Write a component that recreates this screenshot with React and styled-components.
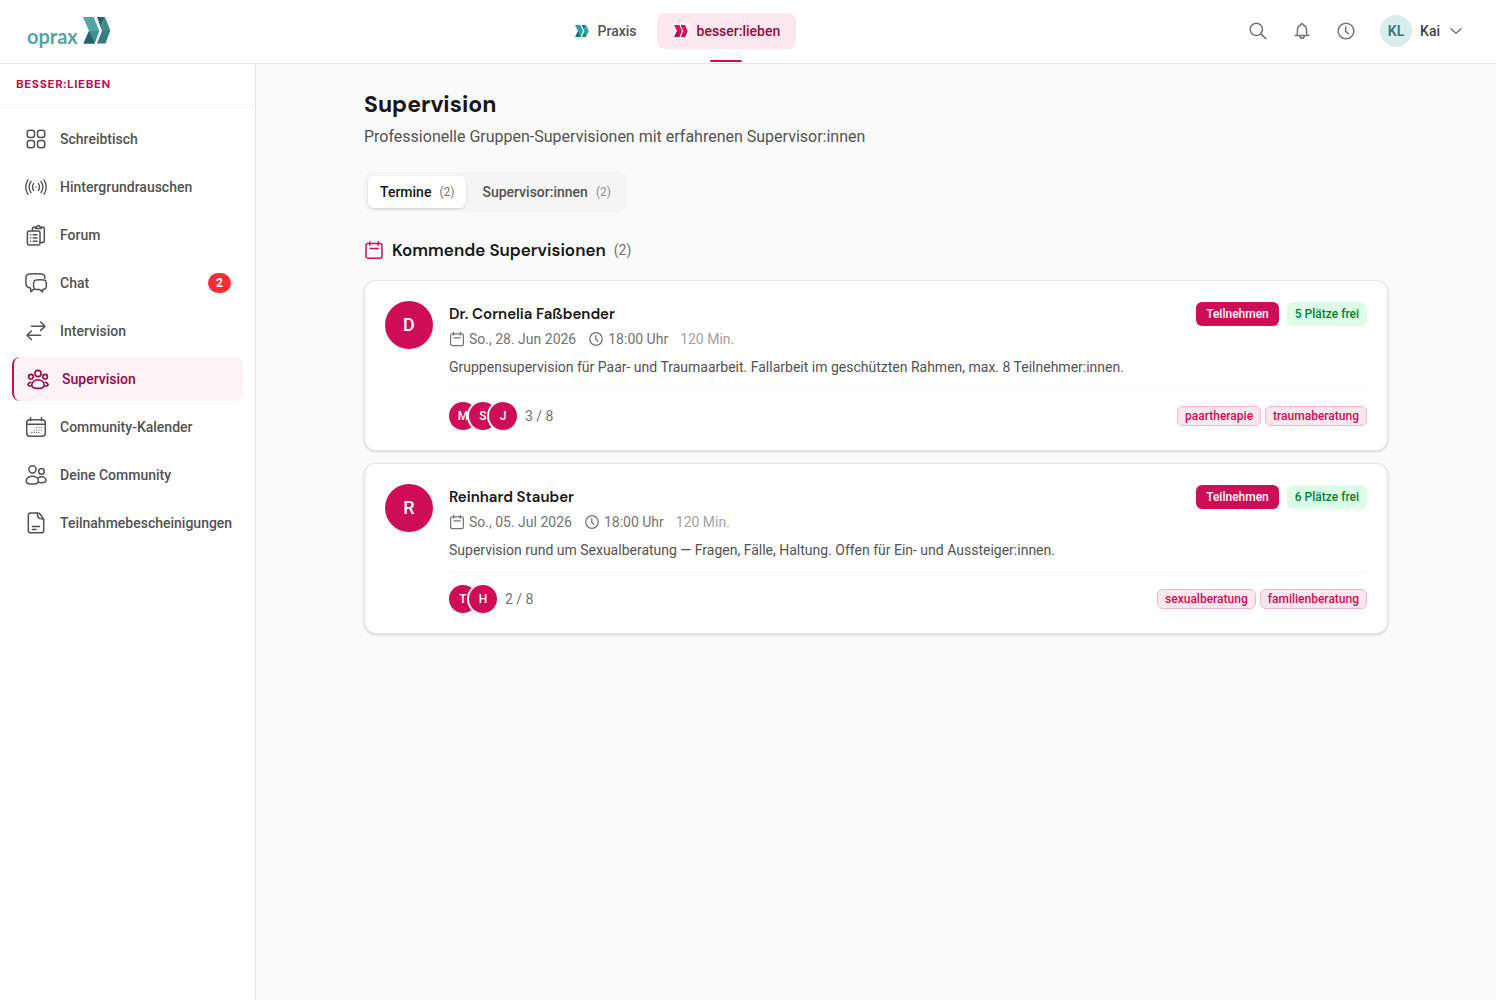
import React, { useState } from "react";
import styled, { createGlobalStyle, css } from "styled-components";

const color = {
  pink: "#cf0c56",
  pinkDark: "#980842",
  pinkTint: "#fce7ee",
  pinkSoft: "#fdf2f6",
  pinkLine: "#f3b5cb",
  ink: "#171717",
  text: "#525252",
  muted: "#737373",
  faint: "#a3a3a3",
  line: "#e5e5e5",
  lineSoft: "#f5f5f5",
  page: "#fafafa",
};

const bodyFont = `Roboto, "Liberation Sans", sans-serif`;
const headingFont = `"DM Sans", Inter, "Liberation Sans", sans-serif`;

const GlobalStyle = createGlobalStyle`
  *, *::before, *::after { box-sizing: border-box; }
  body {
    margin: 0;
    background: ${color.page};
    color: ${color.text};
    font: 400 14px/20px ${bodyFont};
  }
  button { font: inherit; color: inherit; border: 0; background: none; padding: 0; cursor: pointer; }
  a { color: inherit; text-decoration: none; }
  h1, h2, h3, p, ul { margin: 0; padding: 0; }
  ul { list-style: none; }
`;

/* Shell */
const Shell = styled.div`
  min-height: 100vh;
  display: flex;
  flex-direction: column;
`;
const Header = styled.header`
  height: 64px;
  padding: 0 24px 1px;
  display: flex;
  align-items: center;
  justify-content: space-between;
  background: #fff;
  border-bottom: 1px solid ${color.line};
`;
const Body = styled.div`
  flex: 1;
  display: flex;
`;
const Sidebar = styled.aside`
  flex: 0 0 256px;
  min-width: 0;
  background: #fff;
  border-right: 1px solid ${color.line};
`;
const Main = styled.main`
  flex: 1;
  min-width: 0;
  padding: 24px;
`;
const Content = styled.div`
  max-width: 1024px;
  margin: 0 auto;
`;

/* Header */
const Logo = styled.a`
  display: flex;
  align-items: center;
  gap: 5px;
  padding: 0 3px 2px;
  color: #55a3a2;
  font: 700 20px/28px Lato, sans-serif;
`;
const LogoWord = styled.span`
  padding-top: 12px;
`;
const AreaNav = styled.nav`
  display: flex;
  gap: 4px;
`;
const AreaLink = styled.a`
  position: relative;
  height: 36px;
  padding: 0 16px;
  display: flex;
  align-items: center;
  gap: 8px;
  border-radius: 8px;
  font-weight: 500;
  ${(p) =>
    p.$active &&
    css`
      color: ${color.pinkDark};
      background: ${color.pinkTint};
      &::after {
        content: "";
        position: absolute;
        left: 50%;
        bottom: -13px;
        width: 32px;
        height: 2px;
        margin-left: -16px;
        border-radius: 1px;
        background: ${color.pink};
      }
    `}
`;
const HeaderTools = styled.div`
  display: flex;
  align-items: center;
  gap: 8px;
`;
const IconButton = styled.button`
  width: 36px;
  height: 36px;
  display: grid;
  place-items: center;
  border-radius: 8px;
  color: ${color.muted};
`;
const ProfileButton = styled.button`
  display: flex;
  align-items: center;
  gap: 8px;
  padding: 0 8px;
  color: #404040;
  font-weight: 500;
  svg { color: ${color.muted}; }
`;
const ProfileAvatar = styled.span`
  width: 32px;
  height: 32px;
  display: grid;
  place-items: center;
  border-radius: 50%;
  background: #d9edec;
  color: #357777;
  font-weight: 600;
`;

/* Sidebar */
const SidebarTitle = styled.div`
  padding: 12px 16px;
  line-height: 16px;
  border-bottom: 1px solid ${color.lineSoft};
  color: #c00b50;
  font-family: ${headingFont};
  font-size: 12px;
  font-weight: 700;
  letter-spacing: 0.05em;
  text-transform: uppercase;
`;
const NavList = styled.ul`
  display: flex;
  flex-direction: column;
  gap: 4px;
  padding: 12px;
`;
const NavLink = styled.a`
  height: 44px;
  padding: 0 12px;
  display: flex;
  align-items: center;
  gap: 12px;
  border-radius: 8px;
  font-weight: 500;
  white-space: nowrap;
  ${(p) =>
    p.$active &&
    css`
      color: ${color.pinkDark};
      background: ${color.pinkSoft};
      border-left: 2px solid ${color.pink};
    `}
`;
const NavCount = styled.span`
  margin-left: auto;
  padding: 0 8px;
  border-radius: 10px;
  background: #fb2c36;
  color: #fff;
  font-size: 12px;
  font-weight: 700;
`;

/* Page head */
const PageTitle = styled.h1`
  color: ${color.ink};
  font: 700 23px/33px ${headingFont};
`;
const PageLead = styled.p`
  margin-top: 4px;
  font-size: 16px;
  line-height: 24px;
`;
const Tabs = styled.div`
  display: inline-flex;
  gap: 4px;
  margin-top: 23px;
  padding: 4px;
  border-radius: 8px;
  background: ${color.lineSoft};
  vertical-align: top;
`;
const Tab = styled.button`
  height: 32px;
  padding: 0 12px;
  display: flex;
  align-items: center;
  gap: 8px;
  border-radius: 6px;
  font-weight: 500;
  ${(p) =>
    p.$active &&
    css`
      color: ${color.ink};
      background: #fff;
      box-shadow: 0 1px 3px rgba(0, 0, 0, 0.1), 0 1px 2px rgba(0, 0, 0, 0.06);
    `}
`;
const TabCount = styled.span`
  font-size: 12px;
  font-weight: 400;
  color: ${(p) => (p.$active ? color.muted : "#8c8c8c")};
`;
const SectionHead = styled.div`
  display: flex;
  align-items: center;
  gap: 8px;
  margin: 24px 0 16px;
  color: ${color.pink};
`;
const SectionTitle = styled.h2`
  color: ${color.ink};
  font: 600 17px/28px ${headingFont};
`;
const SectionCount = styled.span`
  color: ${color.muted};
`;

/* Cards */
const CardList = styled.div`
  display: flex;
  flex-direction: column;
  gap: 12px;
`;
const Card = styled.article`
  display: flex;
  gap: 16px;
  padding: 20px;
  border: 1px solid ${color.line};
  border-radius: 12px;
  background: #fff;
  box-shadow: 0 1px 3px rgba(0, 0, 0, 0.1), 0 1px 2px rgba(0, 0, 0, 0.06);
`;
const HostAvatar = styled.div`
  flex: none;
  width: 48px;
  height: 48px;
  display: grid;
  place-items: center;
  border-radius: 50%;
  background: ${color.pink};
  color: #fff;
  font-size: 18px;
  font-weight: 500;
`;
const CardBody = styled.div`
  flex: 1;
  min-width: 0;
`;
const CardTop = styled.div`
  display: flex;
  justify-content: space-between;
  align-items: center;
  height: 26px;
`;
const HostName = styled.h3`
  color: ${color.ink};
  font: 600 15px/24px ${headingFont};
`;
const Actions = styled.div`
  display: flex;
  gap: 8px;
`;
const JoinButton = styled.button`
  height: 24px;
  padding: 0 10px;
  border-radius: 6px;
  background: ${color.pink};
  color: #fff;
  font-size: 12px;
  font-weight: 500;
`;
const Seats = styled.span`
  padding: 0 8px;
  border-radius: 6px;
  background: #dcfce7;
  color: #008236;
  font-size: 12px;
  line-height: 24px;
  font-weight: 500;
`;
const Meta = styled.div`
  display: flex;
  gap: 12px;
  margin-top: 2px;
  color: ${color.muted};
`;
const MetaItem = styled.span`
  display: flex;
  align-items: center;
  gap: 4px;
  color: ${(p) => (p.$faint ? color.faint : "inherit")};
`;
const Description = styled.p`
  margin-top: 8px;
`;
const CardFoot = styled.div`
  display: flex;
  align-items: center;
  justify-content: space-between;
  margin-top: 12px;
  padding-top: 12px;
  border-top: 1px solid ${color.lineSoft};
`;
const People = styled.div`
  display: flex;
  align-items: center;
  color: ${color.muted};
`;
const Person = styled.span`
  width: 28px;
  height: 28px;
  display: grid;
  place-items: center;
  border-radius: 50%;
  background: ${color.pink};
  box-shadow: 0 0 0 2px #fff;
  color: #fff;
  font-size: 12px;
  font-weight: 500;
  & + & { margin-left: -8px; }
`;
const PeopleCount = styled.span`
  margin-left: 8px;
`;
const Tags = styled.div`
  display: flex;
  gap: 4px;
`;
const Tag = styled.span`
  padding: 0 7px;
  border: 1px solid ${color.pinkLine};
  border-radius: 6px;
  background: ${color.pinkTint};
  color: ${color.pink};
  font-size: 12px;
  line-height: 18px;
  font-weight: 500;
`;

/* Icons */
const Svg = styled.svg`
  flex: none;
  display: block;
  fill: none;
  stroke: currentColor;
  stroke-linecap: round;
  stroke-linejoin: round;
`;
const Icon = ({ size = 24, weight = 1.5, children }) => (
  <Svg width={size} height={size} viewBox="0 0 24 24" strokeWidth={weight} aria-hidden="true">
    {children}
  </Svg>
);

const GridIcon = () => (
  <Icon>
    <rect x="3.25" y="3.25" width="7.25" height="7.25" rx="2.5" />
    <rect x="13.5" y="3.25" width="7.25" height="7.25" rx="2.5" />
    <rect x="3.25" y="13.5" width="7.25" height="7.25" rx="2.5" />
    <rect x="13.5" y="13.5" width="7.25" height="7.25" rx="2.5" />
  </Icon>
);
const WavesIcon = () => (
  <Icon weight={1.4}>
    <path d="M4 4.8c-3 4.2-3 10.2 0 14.4M7 6.4c-2.2 3.3-2.2 7.9 0 11.2M9.6 8.6c-1.3 2-1.3 4.8 0 6.8" />
    <path d="M20 4.8c3 4.2 3 10.2 0 14.4M17 6.4c2.2 3.3 2.2 7.9 0 11.2M14.4 8.6c1.3 2 1.3 4.8 0 6.8M12 12h.01" />
  </Icon>
);
const ForumIcon = () => (
  <Icon weight={1.5}>
    <rect x="3.4" y="8" width="12.6" height="14" rx="1.6" />
    <path d="M8.4 7.8V6.2c0-1.2.9-2.1 2.1-2.1h.9M17.4 4.1h.8c1.2 0 2.1.9 2.1 2.1v11.2c0 1.2-.9 2.1-2.1 2.1H16.2" />
    <path d="M11.4 5.5c0-1 .7-1.6 1.5-1.7.4-1.7 2.6-1.7 3 0 .8.1 1.5.7 1.5 1.7z" />
    <path d="M6.6 11.7h.1M6.6 15h.1M6.6 18.3h.1M9.2 11.7h3.8M9.2 15h3.8M9.2 18.3h3.8" />
  </Icon>
);
const ChatIcon = () => (
  <Icon weight={1.5}>
    <path d="M20.9 7.4V6.6c0-2.2-1.4-3.4-3.4-3.6-4-.4-8-.4-12 0-2.1.2-3.4 1.5-3.5 3.6-.2 2.3-.2 4.5 0 6.7.1 1.9 1.3 3.1 3.1 3.4l.7.1c.6.1.9.4.9 1v2.9l3-2.4" />
    <path d="M12 8.9c2.8-.3 5.4-.3 7.900 0 1.4.2 2.2 1 2.3 2.3.2 1.7.2 3.3 0 4.900-.1 1.200-.8 1.900-2 2.100l-1.600.3v2.400l-2.900-2.300h-3.600c-1.400-.2-2.200-.9-2.400-2.300-.2-1.600-.2-3.200 0-4.900.2-1.400.9-2.300 2.300-2.500z" />
  </Icon>
);
const SwapIcon = () => (
  <Icon weight={1.6}>
    <path d="M7.5 7.2h13.5M16.7 3l4.3 4.2-4.3 4.2M16.5 16.2H3M7.3 12 3 16.2l4.3 4.3" />
  </Icon>
);
const GroupIcon = () => (
  <Icon weight={1.6}>
    <circle cx="12" cy="6.5" r="3.1" />
    <circle cx="4.9" cy="9.7" r="2.3" />
    <circle cx="19.1" cy="9.7" r="2.3" />
    <path d="M12 12.7c-3.5 0-6.2 2.4-6.2 5.2 0 2.4 2.5 3.5 6.2 3.500s6.200-1.100 6.200-3.500c0-2.800-2.700-5.200-6.200-5.200z" />
    <path d="M4.7 15.200c-1.400.3-2.700 1.400-2.700 2.600 0 .9.9 1.300 2.800 1.200M19.3 15.200c1.400.3 2.700 1.400 2.700 2.600 0 .9-.9 1.300-2.800 1.200" />
  </Icon>
);
const EventsIcon = () => (
  <Icon weight={1.5}>
    <rect x="2.7" y="4.8" width="18.6" height="16.5" rx="3" />
    <path d="M2.7 9.3h18.6M6.5 2.6v3.2M17.5 2.6v3.2" />
    <path
      strokeWidth="1.2"
      d="M12.6 12.6h.01M15 12.6h.01M17.4 12.6h.01M10.2 15h.01M12.6 15h.01M15 15h.01M17.4 15h.01M7.8 17.4h.01M10.2 17.4h.01M12.6 17.4h.01M15 17.4h.01"
    />
  </Icon>
);
const PeopleIcon = () => (
  <Icon weight={1.5}>
    <circle cx="8.5" cy="6.3" r="3.6" />
    <circle cx="17.5" cy="8.4" r="2.8" />
    <path d="M8.3 13.3c-3.3 0-6.1 1.9-6.1 4.600 0 2.300 2.400 3.200 6.100 3.200s6.100-.9 6.100-3.200c0-2.700-2.800-4.600-6.100-4.600z" />
    <path d="M14 15c1-.8 2.2-1.2 3.5-1.2 2.4 0 4.5 1.4 4.5 3.4 0 1.8-1.8 2.5-4.5 2.5-1.2 0-2.2-.1-3-.4" />
  </Icon>
);
const DocumentIcon = () => (
  <Icon>
    <path d="M14 2H6.7C5.2 2 4.3 2.9 4.3 4.4v15c0 1.5.9 2.4 2.4 2.4h10.6c1.5 0 2.4-.9 2.4-2.4V9.2c0-1-.3-1.8-.9-2.5l-2.6-3.5C15.6 2.4 15 2 14 2z" />
    <path d="M12.6 2.2c1 .5 1.2 1.4 1.2 2.6 0 2 .7 2.7 2.5 2.7 1.5 0 2.6.2 3.2 1.3M8.4 15.6h7.2M8.4 18.4h3.6" />
  </Icon>
);
const SearchIcon = () => (
  <Icon size={20} weight={1.8}>
    <circle cx="10" cy="10" r="7.4" />
    <path d="m15.4 15.4 6 5.7" />
  </Icon>
);
const BellIcon = () => (
  <Icon size={20} weight={1.8}>
    <path d="M3.8 17.5h16.4M5.8 17.3c1.2-2 .4-5 .9-8 .4-2.6 1.9-4.3 4.1-4.9.2-1.7 2.2-1.7 2.4 0 2.2.6 3.7 2.3 4.1 4.9.5 3-.3 6 .9 8" />
    <path d="M9.2 17.8c.2 1.9 1.2 2.9 2.8 2.9s2.6-1 2.8-2.9" />
  </Icon>
);
const ClockIcon = ({ size, weight = 1.8 }) => (
  <Icon size={size} weight={weight}>
    <circle cx="12" cy="12" r="9.4" />
    <path d="M11.6 6.8v5.4l3.2 3.2" />
  </Icon>
);
const CalendarIcon = ({ size, weight = 1.8 }) => (
  <Icon size={size} weight={weight}>
    <rect x="2.4" y="4.2" width="19.2" height="17.6" rx="2.4" />
    <path d="M7 2v4.4M17 2v4.4M7.5 10.2h9.5" />
  </Icon>
);
const ChevronIcon = () => (
  <Icon size={16} weight={2}>
    <path d="m4.500 8.500 7.500 7 7.500-7" />
  </Icon>
);

const LogoMark = () => (
  <Svg width="28" height="27" viewBox="0 0 28 27" aria-hidden="true">
    <g stroke="none">
      <path fill="#53a5a3" d="M0 0h10.7l5.6 13.7-4.6 12.8H.5L6 13.7z" />
      <path fill="#3f898b" d="M5.5 14.5 16.3 13.7l-4.6 12.8H.5z" opacity=".8" />
      <path fill="#28606a" d="M6.3 14.5 11.7 26.5H.5z" />
      <path fill="#2b636c" d="M14 0h8l-4.5 10.2z" />
      <path fill="#44898b" d="M22 0l5.3 13.3-4.8 13.2H14L19 14l-1.5-3.8z" />
      <path fill="#2f6c75" d="M19 14h8l-4.5 12.5H14z" opacity=".45" />
    </g>
  </Svg>
);
const BrandMark = ({ light, dark, plate }) => (
  <Svg width="16" height="16" viewBox="0 0 16 16" aria-hidden="true">
    <g stroke="none">
      {plate && <path fill="#fff" d="M0 0h16v16H0z" opacity=".75" />}
      <path fill={light} d="M1 2h5.5L9 8l-2.5 6H1.2L4 8z" />
      <path fill={dark} d="M4 8.5 6.5 14H1.2z" />
      <path fill={dark} d="M7.8 2h4.3l-2.4 4.5z" />
      <path fill={light} d="M12.1 2 14.7 8l-2.6 6H7.9l2.4-5.8-.6-1.7z" />
      <path fill={dark} d="M10.3 8.5 12.1 14H7.9z" opacity=".5" />
    </g>
  </Svg>
);

const navItems = [
  { label: "Schreibtisch", icon: GridIcon },
  { label: "Hintergrundrauschen", icon: WavesIcon },
  { label: "Forum", icon: ForumIcon },
  { label: "Chat", icon: ChatIcon, count: 2 },
  { label: "Intervision", icon: SwapIcon },
  { label: "Supervision", icon: GroupIcon, active: true },
  { label: "Community-Kalender", icon: EventsIcon },
  { label: "Deine Community", icon: PeopleIcon },
  { label: "Teilnahmebescheinigungen", icon: DocumentIcon },
];

const sessions = [
  {
    host: "Dr. Cornelia Faßbender",
    date: "So., 28. Jun 2026",
    description:
      "Gruppensupervision für Paar- und Traumaarbeit. Fallarbeit im geschützten Rahmen, max. 8 Teilnehmer:innen.",
    people: ["M", "S", "J"],
    tags: ["paartherapie", "traumaberatung"],
  },
  {
    host: "Reinhard Stauber",
    date: "So., 05. Jul 2026",
    description: "Supervision rund um Sexualberatung — Fragen, Fälle, Haltung. Offen für Ein- und Aussteiger:innen.",
    people: ["T", "H"],
    tags: ["sexualberatung", "familienberatung"],
  },
];
const CAPACITY = 8;

const SessionCard = ({ session }) => (
  <Card>
    <HostAvatar>{session.host[0]}</HostAvatar>
    <CardBody>
      <CardTop>
        <HostName>{session.host}</HostName>
        <Actions>
          <JoinButton type="button">Teilnehmen</JoinButton>
          <Seats>{CAPACITY - session.people.length} Plätze frei</Seats>
        </Actions>
      </CardTop>
      <Meta>
        <MetaItem>
          <CalendarIcon size={16} weight={1.8} />
          {session.date}
        </MetaItem>
        <MetaItem>
          <ClockIcon size={16} weight={1.9} />
          18:00 Uhr
        </MetaItem>
        <MetaItem $faint>120 Min.</MetaItem>
      </Meta>
      <Description>{session.description}</Description>
      <CardFoot>
        <People>
          {session.people.map((p) => (
            <Person key={p}>{p}</Person>
          ))}
          <PeopleCount>
            {session.people.length} / {CAPACITY}
          </PeopleCount>
        </People>
        <Tags>
          {session.tags.map((t) => (
            <Tag key={t}>{t}</Tag>
          ))}
        </Tags>
      </CardFoot>
    </CardBody>
  </Card>
);

export default function App() {
  const [tab, setTab] = useState("termine");
  const tabs = [
    { id: "termine", label: "Termine" },
    { id: "supervisoren", label: "Supervisor:innen" },
  ];
  return (
    <Shell>
      <GlobalStyle />
      <Header>
        <Logo href="#">
          <LogoWord>oprax</LogoWord>
          <LogoMark />
        </Logo>
        <AreaNav>
          <AreaLink href="#praxis">
            <BrandMark light="#2ba3a3" dark="#0f6f78" />
            Praxis
          </AreaLink>
          <AreaLink href="#besser-lieben" $active>
            <BrandMark light="#d90f5d" dark="#b00a4a" plate />
            besser:lieben
          </AreaLink>
        </AreaNav>
        <HeaderTools>
          <IconButton type="button" aria-label="Suche">
            <SearchIcon />
          </IconButton>
          <IconButton type="button" aria-label="Benachrichtigungen">
            <BellIcon />
          </IconButton>
          <IconButton type="button" aria-label="Verlauf">
            <ClockIcon size={20} />
          </IconButton>
          <ProfileButton type="button">
            <ProfileAvatar>KL</ProfileAvatar>
            Kai
            <ChevronIcon />
          </ProfileButton>
        </HeaderTools>
      </Header>
      <Body>
        <Sidebar>
          <SidebarTitle>besser:lieben</SidebarTitle>
          <nav>
            <NavList>
              {navItems.map(({ label, icon: ItemIcon, active, count }) => (
                <li key={label}>
                  <NavLink href="#" $active={active}>
                    <ItemIcon />
                    {label}
                    {count && <NavCount>{count}</NavCount>}
                  </NavLink>
                </li>
              ))}
            </NavList>
          </nav>
        </Sidebar>
        <Main>
          <Content>
            <PageTitle>Supervision</PageTitle>
            <PageLead>Professionelle Gruppen-Supervisionen mit erfahrenen Supervisor:innen</PageLead>
            <Tabs role="tablist">
              {tabs.map((t) => (
                <Tab
                  key={t.id}
                  type="button"
                  role="tab"
                  aria-selected={tab === t.id}
                  $active={tab === t.id}
                  onClick={() => setTab(t.id)}
                >
                  {t.label}
                  <TabCount $active={tab === t.id}>(2)</TabCount>
                </Tab>
              ))}
            </Tabs>
            <SectionHead>
              <CalendarIcon size={20} />
              <SectionTitle>Kommende Supervisionen</SectionTitle>
              <SectionCount>({sessions.length})</SectionCount>
            </SectionHead>
            <CardList>
              {sessions.map((s) => (
                <SessionCard key={s.host} session={s} />
              ))}
            </CardList>
          </Content>
        </Main>
      </Body>
    </Shell>
  );
}
